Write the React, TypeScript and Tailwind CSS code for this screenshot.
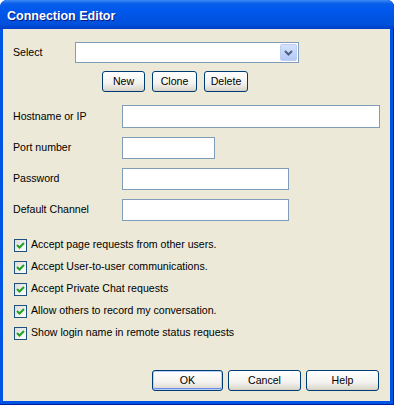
const font = { fontFamily: '"Liberation Sans", Arial, sans-serif' };

function XpButton({ label, width, isDefault }: { label: string; width: string; isDefault?: boolean }) {
  return (
    <button
      className={`${width} h-[21px] rounded-[3px] border border-[#003c74] bg-[linear-gradient(#ffffff,#f3f2ee_60%,#d8d4c7)] text-[10.6px] text-black flex items-center justify-center ${
        isDefault ? "shadow-[inset_0_0_0_1px_#b8d0f8,inset_0_-1px_0_1px_#6b87e6]" : "shadow-[inset_0_-1px_0_0_#d6d0c5]"
      }`}
    >
      {label}
    </button>
  );
}

function TextBox({ width, height = "h-[22px]" }: { width: string; height?: string }) {
  return <div className={`${width} ${height} border border-[#7f9db9] bg-white`} />;
}

function Check({ label }: { label: string }) {
  return (
    <div className="h-[22px] flex items-center gap-[4px]">
      <div className="w-[13px] h-[13px] border border-[#1c5180] bg-[linear-gradient(135deg,#dcdcd7,#ffffff)] flex items-center justify-center">
        <svg width="9" height="9" viewBox="0 0 9 9">
          <path d="M1 4 L3.5 6.5 L8 2" fill="none" stroke="#21a121" strokeWidth="2" />
        </svg>
      </div>
      <span className="text-[10.6px] text-black">{label}</span>
    </div>
  );
}

export default function App() {
  const fields = [
    { label: "Hostname or IP", width: "w-[258px]", height: "h-[23px]" },
    { label: "Port number", width: "w-[93px]" },
    { label: "Password", width: "w-[167px]" },
    { label: "Default Channel", width: "w-[167px]" },
  ];
  const checks = [
    "Accept page requests from other users.",
    "Accept User-to-user communications.",
    "Accept Private Chat requests",
    "Allow others to record my conversation.",
    "Show login name in remote status requests",
  ];

  return (
    <div className="w-[394px] h-[407px] bg-white" style={font}>
      <div className="w-[394px] h-[405px] flex flex-col rounded-t-[7px] bg-[#0054e3] shadow-[inset_-1px_0_0_#001ea0,inset_0_-1px_0_#001ea0]">
        {/* Title bar */}
        <div className="h-[29px] shrink-0 rounded-t-[7px] bg-[linear-gradient(#3d8bf6_0%,#0a5fe8_12%,#0058ee_30%,#0054e3_60%,#0050db_85%,#003dc8_100%)] flex items-center pl-[7px] pt-[3px]">
          <span className="text-white font-bold text-[12.5px] [text-shadow:1px_1px_0_#0a1883]">Connection Editor</span>
        </div>

        {/* Body */}
        <div className="flex-1 ml-[3px] mr-[4px] mb-[4px] bg-[#ece9d8] flex flex-col pl-[10px] pt-[13px] pb-[10px]">
          {/* Select */}
          <div className="flex items-center h-[21px]">
            <span className="w-[62px] text-[10.6px] text-black">Select</span>
            <div className="w-[224px] h-[21px] border border-[#7f9db9] bg-white flex items-center justify-end pr-[1px]">
              <div className="w-[17px] h-[17px] rounded-[2px] bg-[linear-gradient(#d6e2fc,#b4c8f6)] border border-[#b9cdf5] flex items-center justify-center">
                <svg width="9" height="6" viewBox="0 0 9 6">
                  <path d="M1 1 L4.5 4.5 L8 1" fill="none" stroke="#4d6185" strokeWidth="2" />
                </svg>
              </div>
            </div>
          </div>

          <div className="flex gap-[7px] mt-[8px] pl-[89px]">
            <XpButton label="New" width="w-[43px]" />
            <XpButton label="Clone" width="w-[45px]" />
            <XpButton label="Delete" width="w-[44px]" />
          </div>

          {/* Fields */}
          <div className="flex flex-col gap-[9px] mt-[13px]">
            {fields.map((f) => (
              <div key={f.label} className="flex items-center">
                <span className="w-[109px] text-[10.6px] text-black">{f.label}</span>
                <TextBox width={f.width} height={f.height} />
              </div>
            ))}
          </div>

          {/* Checkboxes */}
          <div className="flex flex-col mt-[13px] pl-[1px]">
            {checks.map((c) => (
              <Check key={c} label={c} />
            ))}
          </div>

          <div className="mt-auto flex justify-end gap-[5px] pr-[11px]">
            <XpButton label="OK" width="w-[71px]" isDefault />
            <XpButton label="Cancel" width="w-[73px]" />
            <XpButton label="Help" width="w-[73px]" />
          </div>
        </div>
      </div>
    </div>
  );
}
